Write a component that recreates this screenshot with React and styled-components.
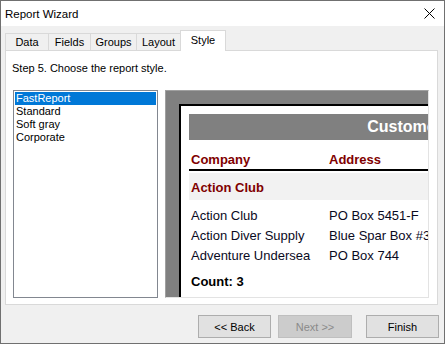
import React from "react";
import styled, { createGlobalStyle } from "styled-components";

const Global = createGlobalStyle`
  html, body { margin: 0; padding: 0; background: #f0f0f0; }
  body { font-family: "Liberation Sans", Arial, sans-serif; }
  * { box-sizing: border-box; }
`;

const Window = styled.div`
  width: 445px;
  height: 344px;
  border: 1px solid #707070;
  display: flex;
  flex-direction: column;
  background: #f0f0f0;
  overflow: hidden;
`;

const TitleBar = styled.div`
  height: 25px;
  flex: none;
  background: #fff;
  display: flex;
  align-items: center;
  justify-content: space-between;
  padding: 0 9px 0 4px;
  font-size: 11.5px;
  color: #000;
`;

const Body = styled.div`
  flex: 1;
  display: flex;
  flex-direction: column;
  padding: 4px 6px 5px 4px;
  font-size: 11px;
  color: #000;
`;

const TabRow = styled.div`
  height: 20px;
  display: flex;
  align-items: flex-end;
  flex: none;
`;

const Tab = styled.div`
  position: relative;
  width: ${(p) => p.$w}px;
  height: ${(p) => (p.$active ? 21 : 17)}px;
  margin-left: ${(p) => (p.$first ? 0 : -1)}px;
  margin-bottom: ${(p) => (p.$active ? -1 : 0)}px;
  border: 1px solid #d9d9d9;
  border-bottom: none;
  background: ${(p) => (p.$active ? "#fff" : "#f0f0f0")};
  z-index: ${(p) => (p.$active ? 2 : 1)};
  display: flex;
  justify-content: center;
  padding-top: ${(p) => (p.$active ? 3 : 2)}px;
  line-height: 13px;
  font-size: 11px;
`;

const Panel = styled.div`
  height: 255px;
  flex: none;
  border: 1px solid #d9d9d9;
  background: #fff;
  padding: 11px 8px 0 7px;
  display: flex;
  flex-direction: column;
`;

const StepText = styled.div`
  line-height: 13px;
  height: 13px;
  margin-left: -1px;
`;

const ContentRow = styled.div`
  margin-top: 15px;
  height: 208px;
  display: flex;
  gap: 7px;
`;

const ListBox = styled.div`
  width: 145px;
  height: 208px;
  border: 1px solid #828790;
  padding: 1px;
  background: #fff;
`;

const ListItem = styled.div`
  height: 13px;
  line-height: 13px;
  padding-left: 1px;
  background: ${(p) => (p.$selected ? "#0078d7" : "transparent")};
  color: ${(p) => (p.$selected ? "#fff" : "#000")};
`;

const Preview = styled.div`
  width: 264px;
  height: 208px;
  border: 1px solid;
  border-color: #a0a0a0 #e3e3e3 #e3e3e3 #a0a0a0;
  background: #808080;
  padding: 13px 0 0 13px;
  overflow: hidden;
`;

const Paper = styled.div`
  width: 460px;
  height: 260px;
  background: #fff;
  border-left: 2px solid #000;
  border-top: 2px solid #000;
  padding: 8px 0 0 8px;
  font-family: "Liberation Sans", Arial, sans-serif;
  font-size: 13px;
`;

const TitleBand = styled.div`
  width: 440px;
  height: 26px;
  background: #808080;
  color: #fff;
  font-weight: bold;
  font-size: 16px;
  line-height: 26px;
  text-align: center;
`;

const ColHeader = styled.div`
  display: flex;
  padding: 12px 0 1px 2px;
  line-height: 16px;
  border-bottom: 2px solid #000;
  color: #800000;
  font-weight: bold;
  width: 440px;
`;

const GroupBand = styled.div`
  margin-top: 2px;
  width: 440px;
  height: 27px;
  background: #f2f2f2;
  color: #800000;
  font-weight: bold;
  padding: 7px 0 0 2px;
  line-height: 16px;
`;

const Rows = styled.div`
  margin-top: 5px;
`;

const DataRow = styled.div`
  display: flex;
  height: 20px;
  line-height: 20px;
  padding-left: 2px;
  padding-top: 1px;
  color: ${(p) => (p.$bold ? "#000" : "#0a0a1e")};
  font-weight: ${(p) => (p.$bold ? "bold" : "normal")};
  margin-top: ${(p) => (p.$gap ? 6 : 0)}px;
`;

const Cell = styled.div`
  width: ${(p) => (p.$w ? p.$w + "px" : "auto")};
  flex: none;
  white-space: nowrap;
`;

const ButtonRow = styled.div`
  margin-top: 10px;
  height: 23px;
  display: flex;
  justify-content: flex-end;
  margin-right: -1px;
`;

const Button = styled.button`
  width: ${(p) => p.$w}px;
  height: 23px;
  margin-left: ${(p) => p.$ml}px;
  border: 1px solid ${(p) => (p.disabled ? "#bfbfbf" : "#adadad")};
  background: ${(p) => (p.disabled ? "#cccccc" : "#e1e1e1")};
  color: ${(p) => (p.disabled ? "#8a8a8a" : "#000")};
  font-family: "Liberation Sans", Arial, sans-serif;
  font-size: 11px;
  padding: 0;
`;

const tabs = [
  { t: "Data", w: 44 },
  { t: "Fields", w: 43 },
  { t: "Groups", w: 47 },
  { t: "Layout", w: 45 },
  { t: "Style", w: 46, active: true },
];

const styles = ["FastReport", "Standard", "Soft gray", "Corporate"];

const rows = [
  ["Action Club", "PO Box 5451-F"],
  ["Action Diver Supply", "Blue Spar Box #3"],
  ["Adventure Undersea", "PO Box 744"],
];

export default function App() {
  return (
    <>
      <Global />
      <Window>
        <TitleBar>
          <span>Report Wizard</span>
          <svg width="11" height="11" viewBox="0 0 11 11">
            <path d="M0.5 0.5 L10.5 10.5 M10.5 0.5 L0.5 10.5" stroke="#000" strokeWidth="1" />
          </svg>
        </TitleBar>
        <Body>
          <TabRow>
            {tabs.map((tb, i) => (
              <Tab key={tb.t} $w={tb.w} $first={i === 0} $active={tb.active}>
                {tb.t}
              </Tab>
            ))}
          </TabRow>
          <Panel>
            <StepText>Step 5. Choose the report style.</StepText>
            <ContentRow>
              <ListBox>
                {styles.map((s, i) => (
                  <ListItem key={s} $selected={i === 0}>
                    {s}
                  </ListItem>
                ))}
              </ListBox>
              <Preview>
                <Paper>
                  <TitleBand>Customers</TitleBand>
                  <ColHeader>
                    <Cell $w={138}>Company</Cell>
                    <Cell>Address</Cell>
                  </ColHeader>
                  <GroupBand>Action Club</GroupBand>
                  <Rows>
                    {rows.map((r) => (
                      <DataRow key={r[0]}>
                        <Cell $w={138}>{r[0]}</Cell>
                        <Cell>{r[1]}</Cell>
                      </DataRow>
                    ))}
                    <DataRow $bold $gap>
                      <Cell>Count: 3</Cell>
                    </DataRow>
                  </Rows>
                </Paper>
              </Preview>
            </ContentRow>
          </Panel>
          <ButtonRow>
            <Button $w={73} $ml={0}>&lt;&lt; Back</Button>
            <Button $w={74} $ml={7} disabled>Next &gt;&gt;</Button>
            <Button $w={73} $ml={14}>Finish</Button>
          </ButtonRow>
        </Body>
      </Window>
    </>
  );
}
